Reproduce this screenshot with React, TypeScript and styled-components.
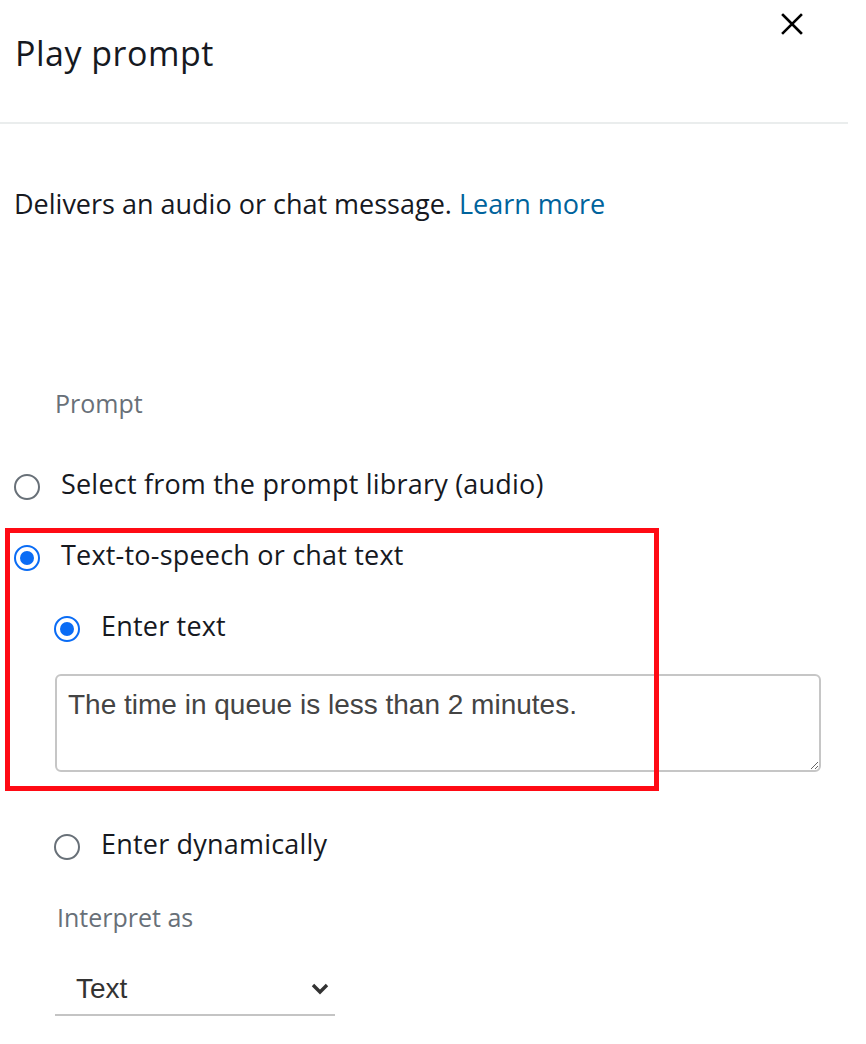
import styled, { createGlobalStyle } from 'styled-components';

const GlobalStyle = createGlobalStyle`
  html, body {
    margin: 0;
    padding: 0;
    background: #ffffff;
  }
  body {
    font-family: "Open Sans", "Noto Sans", sans-serif;
    color: #16191f;
  }
`;

const Page = styled.div`
  width: 866px;
  min-height: 1044px;
  background: #ffffff;
`;

const Header = styled.div`
  display: flex;
  align-items: flex-start;
  justify-content: space-between;
  box-sizing: border-box;
  width: 848px;
  height: 124px;
  padding: 13px 45px 0 15px;
  border-bottom: 2px solid #eaeded;
`;

const Title = styled.h1`
  margin: 20px 0 0;
  font-size: 34px;
  line-height: 40px;
  letter-spacing: 0.5px;
  font-weight: 400;
  color: #16191f;
`;

const CloseButton = styled.button`
  display: flex;
  padding: 0;
  border: none;
  background: none;
  cursor: pointer;
`;

const Body = styled.div`
  padding-left: 14px;
`;

const Description = styled.p`
  margin: 64px 0 0;
  font-size: 27px;
  line-height: 31px;
`;

const Link = styled.a`
  color: #00639c;
  text-decoration: none;
`;

const FieldLabel = styled.div<{ $top: number; $indent: number }>`
  margin-top: ${(p) => p.$top}px;
  padding-left: ${(p) => p.$indent}px;
  font-size: 25px;
  line-height: 29px;
  color: #687078;
`;

const Options = styled.div`
  display: flex;
  flex-direction: column;
  gap: 39px;
  margin-top: 50px;
`;

const Highlighted = styled.div`
  position: relative;
  display: flex;
  flex-direction: column;
  gap: 39px;
`;

// annotation frame drawn over the selected option group
const RedFrame = styled.div`
  position: absolute;
  left: -9px;
  top: -11px;
  width: 654px;
  height: 263px;
  box-sizing: border-box;
  border: 5px solid #ff0a14;
  pointer-events: none;
`;

const RadioRow = styled.label<{ $indent?: number }>`
  display: flex;
  align-items: flex-start;
  gap: 21px;
  padding-left: ${(p) => p.$indent ?? 0}px;
  font-size: 27px;
  line-height: 31px;
  letter-spacing: 0.2px;
  color: #16191f;
  cursor: pointer;
`;

const RadioCircle = styled.span<{ $checked?: boolean }>`
  flex: none;
  position: relative;
  width: 26px;
  height: 26px;
  margin-top: 6px;
  box-sizing: border-box;
  border-radius: 50%;
  border: ${(p) => (p.$checked ? '2.5px solid #0a6cf5' : '2px solid #687078')};
  background: #ffffff;

  &::after {
    content: '';
    display: ${(p) => (p.$checked ? 'block' : 'none')};
    position: absolute;
    left: 50%;
    top: 50%;
    width: 14px;
    height: 14px;
    border-radius: 50%;
    background: #0a6cf5;
    transform: translate(-50%, -50%);
  }
`;

const TextBox = styled.textarea`
  display: block;
  box-sizing: border-box;
  width: 766px;
  height: 98px;
  margin: -7px 0 0 41px;
  padding: 12px 11px 10px;
  border: 2px solid #c6c6c6;
  border-radius: 6px;
  font-family: "Liberation Sans", Arial, sans-serif;
  font-size: 28px;
  line-height: 1.2;
  color: #444444;
  resize: both;
  outline: none;
`;

const DynamicRow = styled.div`
  margin-top: 56px;
`;

const SelectBox = styled.div`
  display: flex;
  align-items: center;
  justify-content: space-between;
  box-sizing: border-box;
  width: 280px;
  margin: 40px 0 0 41px;
  padding: 0 6px 8px 21px;
  border-bottom: 2px solid #c4c4c4;
  font-family: "Liberation Sans", Arial, sans-serif;
  font-size: 28px;
  line-height: 1.2;
  color: #333333;
`;

type RadioProps = {
  label: string
  checked?: boolean
  indent?: number
}

function Radio({ label, checked, indent }: RadioProps) {
  return (
    <RadioRow $indent={indent}>
      <RadioCircle $checked={checked} />
      <span>{label}</span>
    </RadioRow>
  );
}

function App() {
  return (
    <Page>
      <GlobalStyle />
      <Header>
        <Title>Play prompt</Title>
        <CloseButton aria-label="Close">
          <svg width="22" height="22" viewBox="0 0 22 22">
            <path d="M2 2 L20 20 M20 2 L2 20" stroke="#000" strokeWidth="2.6" strokeLinecap="square" />
          </svg>
        </CloseButton>
      </Header>
      <Body>
        <Description>
          Delivers an audio or chat message.
          {' '}
          <Link href="#">Learn more</Link>
        </Description>
        <FieldLabel $top={170} $indent={41}>Prompt</FieldLabel>
        <Options>
          <Radio label="Select from the prompt library (audio)" />
          <Highlighted>
            <RedFrame />
            <Radio label="Text-to-speech or chat text" checked />
            <Radio label="Enter text" checked indent={40} />
            <TextBox defaultValue="The time in queue is less than 2 minutes." />
          </Highlighted>
        </Options>
        <DynamicRow>
          <Radio label="Enter dynamically" indent={40} />
        </DynamicRow>
        <FieldLabel $top={43} $indent={43}>Interpret as</FieldLabel>
        <SelectBox>
          <span>Text</span>
          <svg width="18" height="12" viewBox="0 0 18 12">
            <path d="M2 2 L9 9 L16 2" fill="none" stroke="#333" strokeWidth="3.4" />
          </svg>
        </SelectBox>
      </Body>
    </Page>
  );
}

export default App;
